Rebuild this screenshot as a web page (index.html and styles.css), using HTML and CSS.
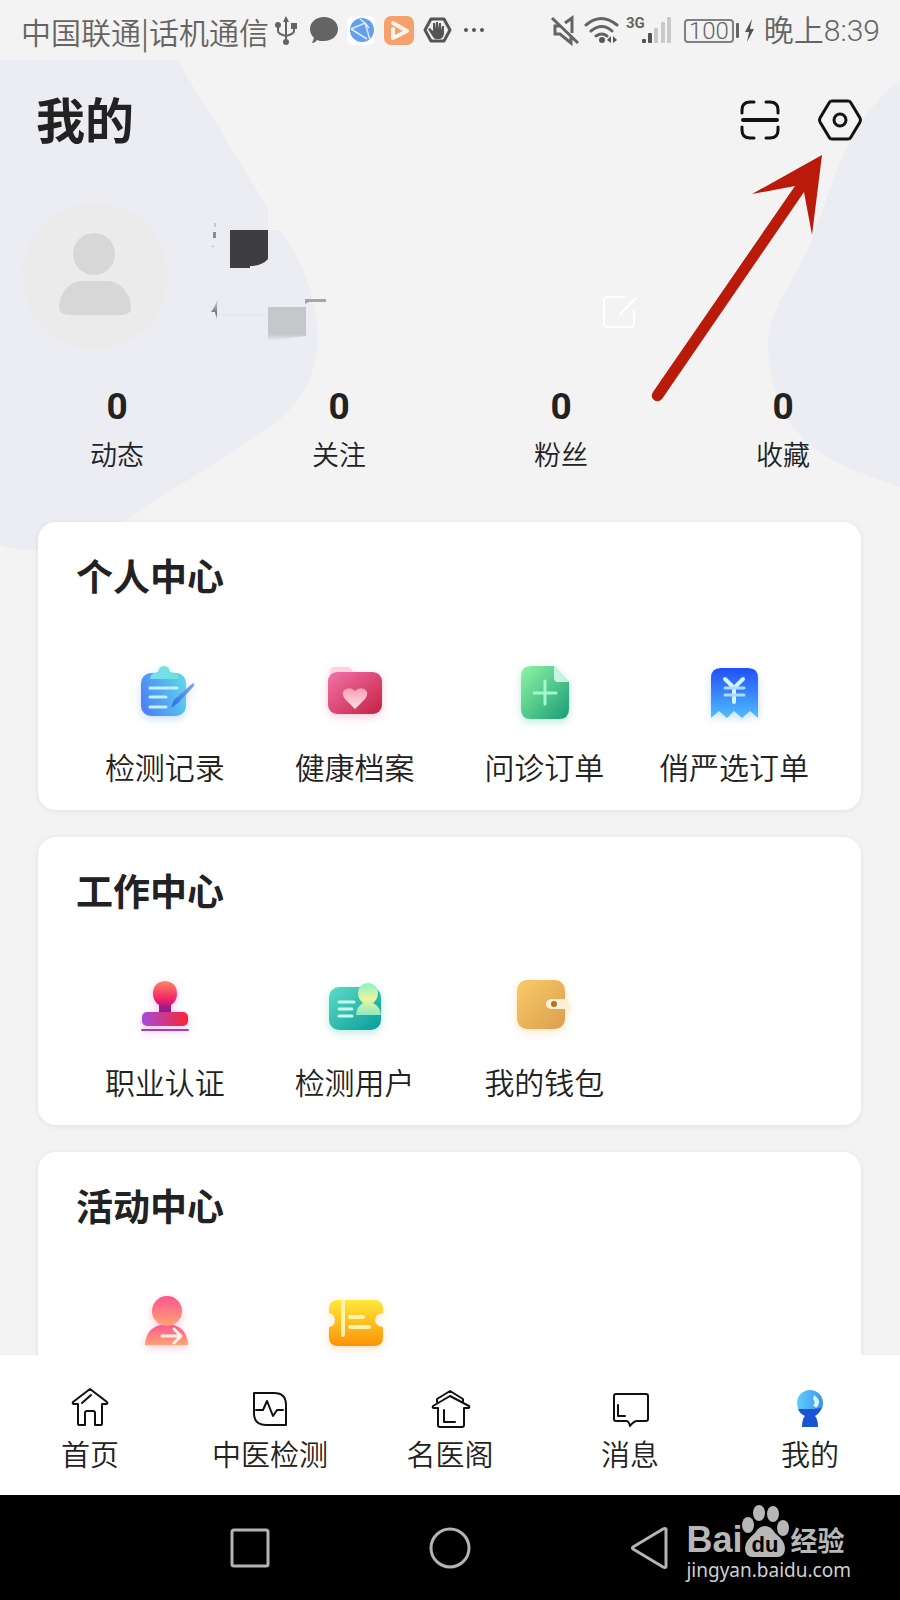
FILE: index.html
```html
<!DOCTYPE html>
<html lang="zh-CN">
<head>
<meta charset="utf-8">
<meta name="viewport" content="width=device-width, initial-scale=1">
<title>我的</title>
<link rel="stylesheet" href="styles.css">
</head>
<body>
<div class="app">
  <div class="status">
    <div class="status-side">
      <span class="carrier">中国联通|话机通信</span>
      <svg class="notices" width="212" height="32" viewBox="0 0 212 32" aria-hidden="true">
        <g fill="none" stroke="#646464" stroke-width="2">
          <path d="M12 4v22M4 11v5q0 3 8 5M20 11v5q0 3-8 5"/>
        </g>
        <g fill="#646464">
          <path d="M12 1l3 6H9z"/><circle cx="12" cy="27" r="3"/><circle cx="4" cy="10" r="3"/><path d="M17 8h6v6h-6z"/>
          <path d="M50 2c8 0 14 5 14 12s-6 12-14 12c-3 0-5 0-7-1-1 2-3 3-5 3l2-5c-3-3-4-6-4-9 0-7 6-12 14-12z"/>
        </g>
        <rect x="73" y="1" width="28" height="29" rx="6" fill="#fdfdfd"/>
        <circle cx="88" cy="15" r="12" fill="#649fee"/>
        <path d="M77 14l14-6 5 17M77 14l16 10M86 4l5 4 4 5" fill="none" stroke="#dceafe" stroke-width="1.5"/>
        <rect x="110" y="1" width="30" height="29" rx="7" fill="#f5a06d"/>
        <path d="M119 14v9l14-7-14-8" fill="none" stroke="#fff3ea" stroke-width="4" stroke-linecap="round" stroke-linejoin="round"/>
        <path d="M157 4h13l6 11-6 11h-13l-6-11z" fill="none" stroke="#555" stroke-width="3" stroke-linejoin="round"/>
        <path d="M159 22l-5-8 2-1 3 3V8h2v6l1-7h2v7l1-6h2v7l1-4h2v8q-1 5-5 5h-3q-2 0-3-2z" fill="#555"/>
        <g fill="#555"><circle cx="192" cy="15" r="2"/><circle cx="200" cy="15" r="2"/><circle cx="208" cy="15" r="2"/></g>
      </svg>
    </div>
    <div class="status-side">
      <svg width="122" height="32" viewBox="0 0 122 32" aria-hidden="true">
        <g fill="none" stroke="#646464" stroke-width="3">
          <path d="M2 3l26 25M10 11H5v8h5l11 9v-6M15 8l7-5v15"/>
          <path d="M36 10q15-13 31 0M41 16q11-9 21 0M46 21q6-4 11 0" stroke-linecap="round"/>
        </g>
        <g fill="#555"><circle cx="52" cy="25" r="3"/><path d="M61 21v7l-4-3zM63 21v7l4-3z"/><rect x="92" y="24" width="4" height="4" rx="1"/><rect x="98" y="18" width="4" height="10" rx="1"/></g>
        <g fill="#c9c9c9"><rect x="104" y="13" width="4" height="15" rx="1"/><rect x="111" y="7" width="4" height="21" rx="1"/><rect x="117" y="2" width="4" height="26" rx="1"/></g>
        <text x="76" y="13" class="net">3G</text>
      </svg>
      <span class="battery">100</span>
      <svg class="bolt" width="20" height="24" viewBox="0 0 20 24" aria-hidden="true"><rect x="0" y="4" width="3" height="15" rx="1" fill="#646464"/><path d="M16 0l-7 13h4l-2 10 7-13h-4z" fill="#555"/></svg>
      <span class="clock">晚上8:39</span>
    </div>
  </div>

  <main class="content">
    <svg class="backdrop" viewBox="0 0 900 520" aria-hidden="true">
      <path d="M0 0H177L268 148V170H280C304 202 316 236 318 278C316 325 294 351 262 373L125 460Q60 503 0 485Z" fill="#ecedf3"/>
      <path d="M900 20C845 64 834 122 812 180C794 222 768 250 768 285C772 395 850 407 900 427Z" fill="#ecedf3"/>
    </svg>

    <header class="top">
      <h1>我的</h1>
      <div class="actions">
        <button class="plain" aria-label="扫一扫">
          <svg width="48" height="48" viewBox="0 0 48 48" fill="none" stroke="#111" stroke-width="3" stroke-linecap="round"><path d="M6 17v-3q0-8 8-8h4M30 6h4q8 0 8 8v3M6 31v3q0 8 8 8h4M30 42h4q8 0 8-8v-3"/><path d="M7 24h34" stroke-width="4"/></svg>
        </button>
        <button class="plain" aria-label="设置">
          <svg width="48" height="48" viewBox="0 0 48 48" fill="none" stroke="#111" stroke-width="3" stroke-linejoin="round"><path d="M16 5h16q2 0 3 2l9 15q1 2 0 4l-9 15q-1 2-3 2H16q-2 0-3-2L4 26q-1-2 0-4l9-15q1-2 3-2z"/><circle cx="24" cy="24" r="6"/></svg>
        </button>
      </div>
    </header>

    <section class="profile">
      <svg width="146" height="146" viewBox="0 0 146 146" role="img" aria-label="头像">
        <circle cx="73" cy="73" r="73" fill="#ebebeb"/>
        <circle cx="72" cy="51" r="21" fill="#d7d7d7"/>
        <path d="M60 78h25c14 0 24 14 24 27q0 7-11 7H48q-11 0-11-7c0-13 9-27 23-27z" fill="#d7d7d7"/>
      </svg>
      <svg class="redacted" width="130" height="146" viewBox="0 0 130 146" aria-hidden="true">
        <defs>
          <linearGradient id="fadeA" x1="0" y1="0" x2="0" y2="1"><stop offset="0" stop-color="#c6c7ca"/><stop offset=".8" stop-color="#c6c7ca"/><stop offset="1" stop-color="#c6c7ca" stop-opacity="0"/></linearGradient>
          <linearGradient id="fadeB" x1="0" y1="0" x2="0" y2="1"><stop offset="0" stop-color="#85868a" stop-opacity=".2"/><stop offset=".7" stop-color="#6d6e72"/><stop offset="1" stop-color="#85868a" stop-opacity=".2"/></linearGradient>
        </defs>
        <path d="M30 27h38v29q-6 7-18 7v2H30z" fill="#3e3e40"/>
        <path d="M68 104h38v29l-38 5z" fill="url(#fadeA)"/>
        <path d="M105 96h21v3h-17l-4 2z" fill="#a5a5a5"/>
        <path d="M11 109q3-4 7-13l-1 8v13l-2-8z" fill="url(#fadeB)"/>
        <path d="M13 29h3v6h-3z" fill="#8c8d91"/><path d="M14 20h2v4h-2zM11 43l3-1v3z" fill="#c9cad0"/>
        <path d="M21 112h45" stroke="#e7e8ed" stroke-width="2"/>
      </svg>
      <button class="plain edit" aria-label="编辑资料">
        <svg width="40" height="40" viewBox="0 0 40 40" fill="none" stroke="#fff" stroke-width="2" stroke-linecap="round"><path d="M25 5H9q-4 0-4 4v22q0 4 4 4h22q4 0 4-4V19M21 22L37 6"/></svg>
      </button>
    </section>

    <ul class="stats">
      <li><b>0</b><span>动态</span></li>
      <li><b>0</b><span>关注</span></li>
      <li><b>0</b><span>粉丝</span></li>
      <li><b>0</b><span>收藏</span></li>
    </ul>

    <section class="card">
      <h2>个人中心</h2>
      <div class="grid">
        <a class="item" href="#records">
          <svg class="glow-blue" width="64" height="64" viewBox="0 0 64 64" aria-hidden="true">
            <defs><linearGradient id="g1" x1="0" y1=".7" x2="1" y2=".3"><stop stop-color="#4b82f7"/><stop offset="1" stop-color="#5cd3ec"/></linearGradient><linearGradient id="g2"><stop stop-color="#7fdcf4"/><stop offset="1" stop-color="#68e3da"/></linearGradient><linearGradient id="g3" x1="1" y1="0" x2="0" y2="1"><stop stop-color="#86a4f3"/><stop offset="1" stop-color="#226fe0"/></linearGradient></defs>
            <rect x="8" y="12" width="45" height="43" rx="10" fill="url(#g1)"/>
            <path d="M17 18q0-6 8-7 1-6 6-6t6 6q9 1 9 7z" fill="url(#g2)"/>
            <path d="M17 27h27M17 36h16M17 46h16" stroke="#c4f0ff" stroke-width="3" stroke-linecap="round"/>
            <path d="M60 22q2 1 1 3L45 42l-7 5 3-8z" fill="url(#g3)"/>
          </svg>
          <span>检测记录</span>
        </a>
        <a class="item" href="#archive">
          <svg class="glow-red" width="64" height="64" viewBox="0 0 64 64" aria-hidden="true">
            <defs><linearGradient id="g4" x1="0" y1="0" x2="1" y2="1"><stop stop-color="#f373ab"/><stop offset="1" stop-color="#c42142"/></linearGradient><linearGradient id="g5" x1="0" y1="0" x2="0" y2="1"><stop stop-color="#ff9fb0"/><stop offset="1" stop-color="#ffe0ea"/></linearGradient></defs>
            <path d="M7 22V11q0-5 5-5h12q5 0 6 6v10z" fill="#fbd5dd"/>
            <rect x="5" y="11" width="54" height="42" rx="9" fill="url(#g4)"/>
            <path d="M32 48L22 38q-5-7 1-10 5-2 9 2 4-4 9-2 6 3 1 10z" fill="url(#g5)"/>
          </svg>
          <span>健康档案</span>
        </a>
        <a class="item" href="#consult">
          <svg class="glow-green" width="64" height="64" viewBox="0 0 64 64" aria-hidden="true">
            <defs><linearGradient id="g6" x1="0" y1="0" x2="1" y2="1"><stop stop-color="#90f5a3"/><stop offset="1" stop-color="#199d77"/></linearGradient></defs>
            <path d="M19 5h23l15 16v27q0 10-10 10H19Q9 58 9 48V15Q9 5 19 5z" fill="url(#g6)"/>
            <path d="M42 5l15 16H46q-4 0-4-4z" fill="#c5f6dd"/>
            <path d="M33 20v23M22 32h22" stroke="#a5f8cb" stroke-width="3" stroke-linecap="round"/>
          </svg>
          <span>问诊订单</span>
        </a>
        <a class="item" href="#orders">
          <svg class="glow-blue" width="64" height="64" viewBox="0 0 64 64" aria-hidden="true">
            <defs><linearGradient id="g7" x1="0" y1="0" x2="0" y2="1"><stop stop-color="#214ff7"/><stop offset="1" stop-color="#4fbdfc"/></linearGradient></defs>
            <path d="M19 7h27q10 0 10 10v40l-8-7-8 7-8-7-7 7-8-7-8 7V17Q9 7 19 7z" fill="url(#g7)"/>
            <path d="M23 18l9 9 9-9M32 27v14" fill="none" stroke="#d5f4ff" stroke-width="4" stroke-linecap="round"/><path d="M23 27h19M23 34h19" stroke="#a9dcff" stroke-width="3" stroke-linecap="round"/>
          </svg>
          <span>俏严选订单</span>
        </a>
      </div>
    </section>

    <section class="card">
      <h2>工作中心</h2>
      <div class="grid">
        <a class="item" href="#certify">
          <svg class="glow-purple" width="64" height="64" viewBox="0 0 64 64" aria-hidden="true">
            <defs><linearGradient id="g8" x1="0" y1="0" x2="0" y2="1"><stop stop-color="#fb8763"/><stop offset=".6" stop-color="#f01e68"/><stop offset=".8" stop-color="#a61b85"/><stop offset="1" stop-color="#7f2190"/></linearGradient><linearGradient id="g9"><stop stop-color="#a44bdc"/><stop offset="1" stop-color="#fb2431"/></linearGradient></defs>
            <path d="M32 5q12 1 12 13 0 7-6 11v8H26v-8q-6-4-6-11Q20 6 32 5z" fill="url(#g8)"/>
            <rect x="9" y="36" width="46" height="14" rx="5" fill="url(#g9)"/>
            <path d="M9 54h46" stroke="#a13fae" stroke-width="2" stroke-linecap="round"/>
          </svg>
          <span>职业认证</span>
        </a>
        <a class="item" href="#users">
          <svg class="glow-green" width="64" height="64" viewBox="0 0 64 64" aria-hidden="true">
            <defs><linearGradient id="g10" x1="0" y1="0" x2="1" y2="1"><stop stop-color="#5edcc5"/><stop offset="1" stop-color="#079c9b"/></linearGradient><linearGradient id="g11" x1="0" y1="0" x2="0" y2="1"><stop stop-color="#86f3ca"/><stop offset=".5" stop-color="#eef49e"/><stop offset="1" stop-color="#8fe8c4"/></linearGradient></defs>
            <rect x="6" y="11" width="52" height="43" rx="10" fill="url(#g10)"/>
            <path d="M45 7q10 1 10 10 0 6-5 10 7 3 8 12H33q1-9 7-12-5-4-5-10Q35 8 45 7z" fill="url(#g11)"/>
            <path d="M16 26h15M16 33h13M16 40h13" stroke="#c9fbea" stroke-width="3" stroke-linecap="round"/>
          </svg>
          <span>检测用户</span>
        </a>
        <a class="item" href="#wallet">
          <svg class="glow-gold" width="64" height="64" viewBox="0 0 64 64" aria-hidden="true">
            <defs><linearGradient id="g12" x1="0" y1="0" x2="1" y2="1"><stop stop-color="#f9cb68"/><stop offset="1" stop-color="#dc9e4e"/></linearGradient></defs>
            <rect x="5" y="4" width="48" height="49" rx="10" fill="url(#g12)"/>
            <path d="M39 23h15q5 2 4 10H39q-5-1-5-5t5-5z" fill="#fdf0d6"/><circle cx="42" cy="28" r="3" fill="#a9791f"/>
          </svg>
          <span>我的钱包</span>
        </a>
      </div>
    </section>

    <section class="card">
      <h2>活动中心</h2>
      <div class="grid">
        <a class="item" href="#invite" aria-label="邀请">
          <svg class="glow-red" width="64" height="64" viewBox="0 0 64 64" aria-hidden="true">
            <defs><linearGradient id="g13" x1="0" y1="0" x2="0" y2="1"><stop stop-color="#fa5590"/><stop offset="1" stop-color="#fea373"/></linearGradient></defs>
            <path d="M12 54q1-20 22-21 20 1 21 21z" fill="url(#g13)"/><circle cx="34" cy="20" r="15" fill="url(#g13)"/>
            <path d="M29 45h18M41 38l7 7-7 7" fill="none" stroke="#fff0ea" stroke-width="3" stroke-linecap="round" stroke-linejoin="round"/>
          </svg>
        </a>
        <a class="item" href="#coupons" aria-label="卡券">
          <svg class="glow-gold" width="64" height="64" viewBox="0 0 64 64" aria-hidden="true">
            <defs><linearGradient id="g14" x1="0" y1="0" x2="0" y2="1"><stop stop-color="#ffe83a"/><stop offset="1" stop-color="#fd9207"/></linearGradient></defs>
            <path d="M15 9h36q9 0 9 9v4q-8 1-8 7t8 7v10q0 9-9 9H15q-9 0-9-9V36q6-1 6-7t-6-7v-4q0-9 9-9z" fill="url(#g14)"/>
            <path d="M20 10v34M27 26h13M27 36h19" stroke="#fff2ac" stroke-width="4" stroke-linecap="round"/>
          </svg>
        </a>
      </div>
    </section>

    <svg class="pointer" width="172" height="250" viewBox="0 0 172 250" aria-hidden="true"><path d="M172 0l-10 80-8-43L12 244q-4 4-8 1-4-3-1-8L145 31l-43 8z" fill="#ba1a0a"/></svg>
  </main>

  <nav class="tabs" aria-label="主导航">
    <a href="#home"><svg width="44" height="44" viewBox="0 0 44 44" aria-hidden="true"><path d="M22 5L5 18q-1 2 1 2h4v20q0 1 1 1h6V29q0-2 2-2h6q2 0 2 2v12h6q1 0 1-1V20h4q2 0 1-2zM14 19l9-8"/></svg><span>首页</span></a>
    <a href="#check"><svg width="44" height="44" viewBox="0 0 44 44" aria-hidden="true"><path d="M6 9h20q12 0 12 12v20H18Q6 41 6 29zM8 26h7l4-9 6 15 4-6h6"/></svg><span>中医检测</span></a>
    <a href="#doctors"><svg width="44" height="44" viewBox="0 0 44 44" aria-hidden="true"><path d="M22 12L5 22q-1 2 1 2h4v17q0 2 2 2h22q2 0 2-2V24h4q2 0 1-2zM9 18v-3L22 7l13 8v3M16 26v12h11"/></svg><span>名医阁</span></a>
    <a href="#messages"><svg width="44" height="44" viewBox="0 0 44 44" aria-hidden="true"><path d="M8 10h30q2 0 2 2v23q0 2-2 2h-9q-3 0-7 5-1-5-4-5H8q-2 0-2-2V12q0-2 2-2zM10 21v11h7"/></svg><span>消息</span></a>
    <a href="#mine" aria-current="page"><svg class="filled" width="44" height="44" viewBox="0 0 44 44" aria-hidden="true">
      <defs><linearGradient id="g15"><stop stop-color="#61cdfa"/><stop offset="1" stop-color="#3b93ee"/></linearGradient></defs>
      <circle cx="22" cy="19" r="13" fill="url(#g15)"/><path d="M10 25h12q8 0 12-2-3 7-7 9 3 3 3 11H14q0-8 3-11-5-2-7-7z" fill="#1a53d4"/><path d="M26 11q9 6 2 13-1-2-3-2 3-4 0-7z" fill="#d9f3ff"/></svg><span>我的</span></a>
  </nav>

  <footer class="system">
    <button class="plain" aria-label="最近任务"><svg width="44" height="44" viewBox="0 0 44 44"><rect x="4" y="4" width="36" height="36" rx="2"/></svg></button>
    <button class="plain" aria-label="主屏幕"><svg width="44" height="44" viewBox="0 0 44 44"><circle cx="22" cy="22" r="19"/></svg></button>
    <button class="plain" aria-label="返回"><svg width="44" height="44" viewBox="0 0 44 44"><path d="M38 3v38q-1 1-3 0L5 23q-1-1 0-2L35 3q2-1 3 0z"/></svg></button>
    <div class="mark">
      <div class="mark-name">
        <span class="bai">Bai</span>
        <svg width="48" height="54" viewBox="0 0 48 54" aria-label="du" role="img">
          <g fill="#b7b7b7"><ellipse cx="6" cy="21" rx="6" ry="8"/><ellipse cx="17" cy="9" rx="6" ry="8"/><ellipse cx="31" cy="10" rx="6" ry="8"/><ellipse cx="41" cy="24" rx="6" ry="8"/><path d="M23 22q6 0 10 7 10 8 10 15 0 9-8 9H11q-8 0-8-9 0-7 10-15 4-7 10-7z"/></g>
          <text x="23" y="48" class="du">du</text>
        </svg>
        <span class="exp">经验</span>
      </div>
      <div class="mark-url">jingyan.baidu.com</div>
    </div>
  </footer>
</div>
</body>
</html>
```
FILE: styles.css
```css
* { box-sizing: border-box; }
body { margin: 0; background: #f3f3f3; color: #222; font-family: Roboto, "Noto Sans CJK SC", sans-serif; }
h1, h2, ul { margin: 0; padding: 0; }
svg { display: block; flex: none; }
a { color: inherit; text-decoration: none; }
.plain { display: block; padding: 0; border: 0; background: none; cursor: pointer; }

.app { display: flex; flex-direction: column; height: 100vh; }

.status { display: flex; justify-content: space-between; flex: none; height: 60px; padding: 2px 20px 0 21px; color: #646464; font-size: 30px; line-height: 58px; white-space: nowrap; }
.status-side { display: flex; align-items: center; }
.carrier { font-family: "Noto Sans CJK SC", sans-serif; font-weight: 350; }
.notices { margin-left: 5px; }
.net { font: bold 15px Roboto, sans-serif; fill: #646464; }
.battery { margin-left: 12px; padding: 0 3px; border: 2px solid #808080; border-radius: 4px; font-size: 24px; font-weight: 300; line-height: 20px; }
.bolt { margin: 0 8px 0 2px; }
.clock { font-weight: 350; }

.content { position: relative; flex: 1; min-height: 0; overflow: hidden; }
.content > * { position: relative; }
.content > .backdrop { position: absolute; top: 0; left: 0; width: 100%; }

.top { display: flex; align-items: center; justify-content: space-between; height: 120px; padding: 0 36px; }
.top h1 { padding-top: 6px; font-size: 49px; line-height: 60px; }
.actions { display: flex; gap: 32px; }

.profile { display: flex; padding: 23px 22px 0; }
.redacted { margin-left: 32px; }
.edit { align-self: flex-end; margin: 0 0 17px 269px; }

.stats { display: grid; grid-template-columns: repeat(4, 1fr); margin-top: 36px; padding: 0 6px; list-style: none; text-align: center; }
.stats b { display: block; font-size: 37px; line-height: 44px; }
.stats span { display: block; margin-top: 7px; font-size: 27px; font-weight: 350; line-height: 40px; }

.card { margin: 0 39px 27px 38px; padding: 35px 32px 21px; border-radius: 18px; background: #fff; box-shadow: 0 1px 6px rgba(0, 0, 0, .08); }
.stats + .card { margin-top: 46px; }
.card h2 { padding-left: 6px; font-size: 37px; line-height: 44px; }
.grid { display: grid; grid-template-columns: repeat(4, 1fr); margin-top: 60px; }
.item { display: flex; flex-direction: column; align-items: center; gap: 24px; font-size: 30px; font-weight: 350; line-height: 40px; white-space: nowrap; }
.glow-blue { filter: drop-shadow(0 3px 4px rgba(80, 150, 255, .3)); }
.glow-red { filter: drop-shadow(0 3px 4px rgba(250, 90, 130, .3)); }
.glow-green { filter: drop-shadow(0 3px 4px rgba(40, 190, 150, .3)); }
.glow-purple { filter: drop-shadow(0 2px 4px rgba(220, 60, 220, .3)); }
.glow-gold { filter: drop-shadow(0 3px 4px rgba(245, 170, 60, .3)); }

.content > .pointer { position: absolute; top: 95px; right: 78px; }

.tabs { display: grid; grid-template-columns: repeat(5, 1fr); flex: none; padding: 29px 0 21px; background: #fff; }
.tabs a { display: flex; flex-direction: column; align-items: center; gap: 10px; font-size: 29px; font-weight: 350; line-height: 36px; white-space: nowrap; }
.tabs svg { fill: none; stroke: #111; stroke-width: 2; stroke-linejoin: round; stroke-linecap: round; }
.tabs .filled { stroke: none; }

.system { position: relative; display: grid; grid-template-columns: repeat(3, 1fr); justify-items: center; align-items: center; flex: none; height: 105px; padding: 0 150px; background: #000; }
.system button svg { fill: none; stroke: #b4b4b4; stroke-width: 3; stroke-linejoin: round; }
.mark { position: absolute; right: 49px; bottom: 17px; color: #b7b7b7; }
.mark-name { display: flex; align-items: flex-end; }
.bai { font: bold 36px/36px "Liberation Sans", sans-serif; height: 36px; }
.du { font: bold 22px "Liberation Sans", sans-serif; fill: #000; text-anchor: middle; }
.exp { font-size: 27px; font-weight: 700; line-height: 32px; }
.mark-url { font: 19px/25px "Noto Sans", sans-serif; color: #d0d0d0; }
```
